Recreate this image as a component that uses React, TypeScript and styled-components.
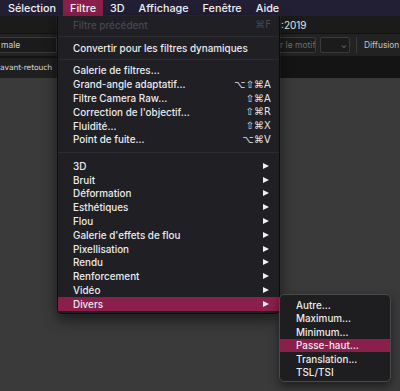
import React from "react";
import styled, { createGlobalStyle } from "styled-components";

const GlobalStyle = createGlobalStyle`
  html, body { margin: 0; padding: 0; background: #3a3a3a; overflow: hidden; }
  * { box-sizing: border-box; }
`;

const UI_FONT = `Inter, "Liberation Sans", sans-serif`;
const HILITE = "#8a1f4b";

const Screen = styled.div`
  position: relative;
  width: 400px;
  height: 391px;
  overflow: hidden;
  display: flex;
  flex-direction: column;
  font-family: ${UI_FONT};
  background: #3a3a3a;
`;

const MenuBar = styled.div`
  display: flex;
  height: 16px;
  padding-left: 1px;
  background: #221e33;
  flex-shrink: 0;
`;

const BarItem = styled.div<{ $active?: boolean }>`
  display: flex;
  align-items: center;
  padding: 0 7px;
  height: 16px;
  font-size: 10.8px;
  font-weight: 500;
  color: #f2f2f4;
  background: ${(p) => (p.$active ? HILITE : "transparent")};
  white-space: nowrap;
`;

const DocBar = styled.div`
  height: 18px;
  flex-shrink: 0;
  background: #1b1b1b;
  border-bottom: 1px solid #111;
  display: flex;
  align-items: center;
  padding-left: 281px;
  font-size: 10px;
  color: #e8e8e8;
`;

const OptionsBar = styled.div`
  height: 22px;
  flex-shrink: 0;
  background: #222;
  display: flex;
  align-items: center;
  justify-content: space-between;
`;

const Field = styled.div<{ $w: number; $dim?: boolean }>`
  width: ${(p) => p.$w}px;
  height: 16px;
  border: 1px solid #3b3b3b;
  background: #1b1b1b;
  border-radius: 2px;
  display: flex;
  align-items: center;
  justify-content: space-between;
  padding: 0 2px;
  font-size: 8.5px;
  color: ${(p) => (p.$dim ? "#6e6e6e" : "#cfcfcf")};
  white-space: nowrap;
  overflow: hidden;
`;

const LeftField = styled(Field)`
  border-left: none;
  border-radius: 0 2px 2px 0;
  padding-left: 1px;
`;

const RightGroup = styled.div`
  display: flex;
  align-items: center;
  gap: 4px;
`;

const Divider = styled.div`
  width: 1px;
  height: 16px;
  background: #3a3a3a;
  margin: 0 3px 0 2px;
`;

const Label = styled.div`
  font-size: 8.4px;
  color: #c4c4c4;
  white-space: nowrap;
  width: 36px;
`;

const Chevron = styled.span`
  font-size: 8px;
  color: #777;
  margin-left: auto;
`;

const TabBar = styled.div`
  height: 22px;
  flex-shrink: 0;
  background: #141414;
  display: flex;
  align-items: flex-end;
`;

const Tab = styled.div`
  height: 20px;
  width: 57px;
  background: #1f1f1f;
  display: flex;
  align-items: center;
  font-family: "DejaVu Sans", sans-serif;
  font-size: 7.6px;
  letter-spacing: -0.1px;
  color: #dcdcdc;
  white-space: nowrap;
  padding-bottom: 2px;
`;

const Canvas = styled.div`
  flex: 1;
  background: #3a3a3a;
`;

const Menu = styled.div`
  position: absolute;
  left: 57px;
  top: 16px;
  width: 223px;
  padding: 2px 0 2px;
  background: #1f1f24;
  border: 1px solid #0c0c0e;
  border-top: none;
  border-radius: 0 0 5px 5px;
  box-shadow: 0 6px 14px rgba(0, 0, 0, 0.55), 0 0 0 0.5px rgba(80, 80, 90, 0.35);
`;

const Item = styled.div<{ $active?: boolean; $disabled?: boolean }>`
  height: 13.8px;
  display: flex;
  align-items: center;
  padding: 0 8px 0 15px;
  font-size: 9.9px;
  font-weight: 500;
  color: ${(p) => (p.$disabled ? "#48484e" : "#ececee")};
  background: ${(p) => (p.$active ? HILITE : "transparent")};
  white-space: nowrap;
`;

const ItemText = styled.span`
  flex: 1;
`;

const Shortcut = styled.span<{ $disabled?: boolean }>`
  font-family: "DejaVu Sans", sans-serif;
  font-size: 9.8px;
  letter-spacing: 0.2px;
  color: ${(p) => (p.$disabled ? "#48484e" : "#e4e4e6")};
`;

const Arrow = styled.span`
  width: 0;
  height: 0;
  border-top: 3.5px solid transparent;
  border-bottom: 3.5px solid transparent;
  border-left: 6px solid #f0f0f0;
  margin-right: 2px;
`;

const Separator = styled.div<{ $h: number }>`
  height: ${(p) => p.$h}px;
  display: flex;
  align-items: center;
  &::after {
    content: "";
    flex: 1;
    height: 1px;
    background: #2c2c31;
  }
`;

const SubMenu = styled.div`
  position: absolute;
  left: 279px;
  top: 294px;
  width: 112px;
  padding: 3px 0 2px;
  background: #1e1e20;
  border: 1px solid #4a4a4c;
  border-radius: 5px;
  box-shadow: 0 4px 10px rgba(0, 0, 0, 0.5);
  overflow: hidden;
`;

const SubItem = styled.div<{ $active?: boolean }>`
  height: 13.5px;
  display: flex;
  align-items: center;
  padding-left: 16px;
  font-size: 9.9px;
  font-weight: 500;
  color: #ececee;
  background: ${(p) => (p.$active ? HILITE : "transparent")};
  white-space: nowrap;
`;

const barItems = ["Sélection", "Filtre", "3D", "Affichage", "Fenêtre", "Aide"];

const toolItems: [string, string][] = [
  ["Galerie de filtres...", ""],
  ["Grand-angle adaptatif...", "⌥⇧⌘A"],
  ["Filtre Camera Raw...", "⇧⌘A"],
  ["Correction de l'objectif...", "⇧⌘R"],
  ["Fluidité...", "⇧⌘X"],
  ["Point de fuite...", "⌥⌘V"],
];

const groups = [
  "3D",
  "Bruit",
  "Déformation",
  "Esthétiques",
  "Flou",
  "Galerie d'effets de flou",
  "Pixellisation",
  "Rendu",
  "Renforcement",
  "Vidéo",
  "Divers",
];

const subItems = ["Autre...", "Maximum...", "Minimum...", "Passe-haut...", "Translation...", "TSL/TSI"];

export default function App() {
  return (
    <>
      <GlobalStyle />
      <Screen>
        <MenuBar>
          {barItems.map((b) => (
            <BarItem key={b} $active={b === "Filtre"}>
              {b}
            </BarItem>
          ))}
        </MenuBar>
        <DocBar>:2019</DocBar>
        <OptionsBar>
          <LeftField $w={57}>male</LeftField>
          <RightGroup>
            <Field $w={39} $dim>
              <span style={{ marginLeft: "auto" }}>r le motif</span>
            </Field>
            <Field $w={30}>
              <Chevron>⌄</Chevron>
            </Field>
            <Divider />
            <Label>Diffusion</Label>
          </RightGroup>
        </OptionsBar>
        <TabBar>
          <Tab>avant-retouch</Tab>
        </TabBar>
        <Canvas />

        <Menu>
          <Item $disabled>
            <ItemText>Filtre précédent</ItemText>
            <Shortcut $disabled>⌘F</Shortcut>
          </Item>
          <Separator $h={9} />
          <Item>
            <ItemText>Convertir pour les filtres dynamiques</ItemText>
          </Item>
          <Separator $h={9} />
          {toolItems.map(([t, s]) => (
            <Item key={t}>
              <ItemText>{t}</ItemText>
              {s && <Shortcut>{s}</Shortcut>}
            </Item>
          ))}
          <Separator $h={12.5} />
          {groups.map((g) => (
            <Item key={g} $active={g === "Divers"}>
              <ItemText>{g}</ItemText>
              <Arrow />
            </Item>
          ))}
        </Menu>

        <SubMenu>
          {subItems.map((s) => (
            <SubItem key={s} $active={s === "Passe-haut..."}>
              {s}
            </SubItem>
          ))}
        </SubMenu>
      </Screen>
    </>
  );
}
